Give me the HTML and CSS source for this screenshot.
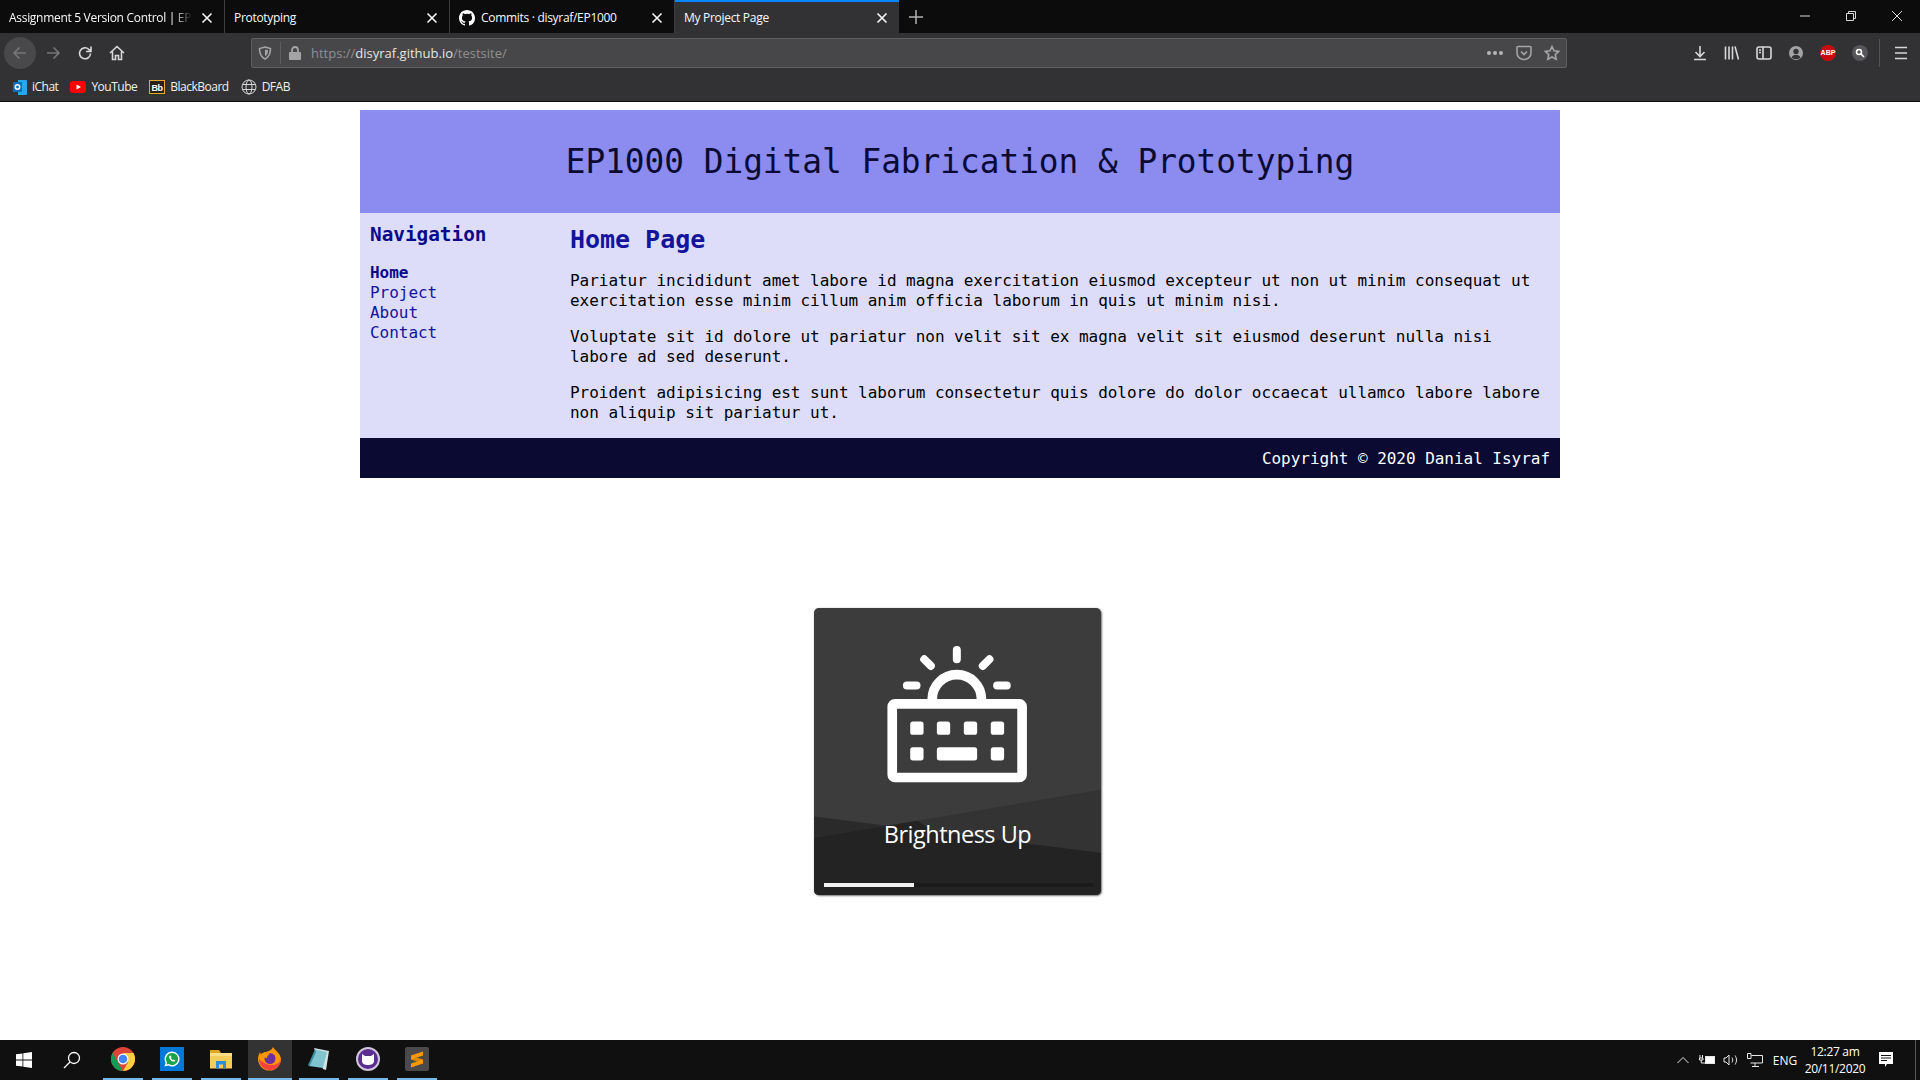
FILE: index.html
```html
<!DOCTYPE html>
<html>

<head>
    <meta charset="utf-8">
    <title>My Project Page</title>
    <link rel="stylesheet" href="styles.css">
</head>

<body>
    <!-- browser window -->
    <div class="tabbar">
        <div class="tab">
            <span class="tab-title fade">Assignment 5 Version Control | EP1000</span>
            <svg class="tab-close" width="12" height="12" viewBox="0 0 12 12"><path d="M1.5 1.5l9 9M10.5 1.5l-9 9" /></svg>
        </div>
        <div class="tab">
            <span class="tab-title">Prototyping</span>
            <svg class="tab-close" width="12" height="12" viewBox="0 0 12 12"><path d="M1.5 1.5l9 9M10.5 1.5l-9 9" /></svg>
        </div>
        <div class="tab">
            <svg class="tab-icon" width="16" height="16" viewBox="0 0 16 16"><path fill="#fff" d="M8 0C3.58 0 0 3.58 0 8c0 3.54 2.29 6.53 5.47 7.59.4.07.55-.17.55-.38v-1.34c-2.23.48-2.69-1.07-2.69-1.07-.36-.93-.89-1.17-.89-1.17-.73-.5.05-.49.05-.49.8.06 1.23.82 1.23.82.71 1.22 1.87.87 2.33.66.07-.52.28-.87.51-1.07-1.78-.2-3.64-.89-3.64-3.95 0-.87.31-1.59.82-2.15-.08-.2-.36-1.02.08-2.12 0 0 .67-.21 2.2.82A7.6 7.6 0 0 1 8 3.87c.68 0 1.36.09 2 .27 1.53-1.04 2.2-.82 2.2-.82.44 1.1.16 1.92.08 2.12.51.56.82 1.27.82 2.15 0 3.07-1.87 3.75-3.65 3.95.29.25.54.73.54 1.48v2.2c0 .21.15.46.55.38A8 8 0 0 0 16 8c0-4.42-3.58-8-8-8z" /></svg>
            <span class="tab-title">Commits · disyraf/EP1000</span>
            <svg class="tab-close" width="12" height="12" viewBox="0 0 12 12"><path d="M1.5 1.5l9 9M10.5 1.5l-9 9" /></svg>
        </div>
        <div class="tab tab-active">
            <span class="tab-title">My Project Page</span>
            <svg class="tab-close" width="12" height="12" viewBox="0 0 12 12"><path d="M1.5 1.5l9 9M10.5 1.5l-9 9" /></svg>
        </div>
        <svg class="new-tab" width="14" height="14" viewBox="0 0 14 14"><path d="M7 0v14M0 7h14" /></svg>
        <div class="window-buttons">
            <svg width="46" height="12" viewBox="0 0 46 12"><path d="M18 6h10" /></svg>
            <svg width="46" height="12" viewBox="0 0 46 12"><path d="M18.500 3.500h7v7h-7zM20.500 3.500v-2h7v7h-2" /></svg>
            <svg width="46" height="12" viewBox="0 0 46 12"><path d="M18 1l10 10M28 1l-10 10" /></svg>
        </div>
    </div>

    <div class="toolbar">
        <div class="nav-button nav-back">
            <svg width="16" height="16" viewBox="0 0 16 16"><path class="dim" d="M14 8H2M7.500 2.500L2 8l5.500 5.500" /></svg>
        </div>
        <div class="nav-button">
            <svg width="16" height="16" viewBox="0 0 16 16"><path class="dim" d="M2 8h12M8.500 2.500L14 8l-5.500 5.500" /></svg>
        </div>
        <div class="nav-button">
            <svg width="16" height="16" viewBox="0 0 16 16"><path d="M13.500 8.500a5.500 5.500 0 1 1-1.700-4.200L14 6.300M14 1.500v5h-5" /></svg>
        </div>
        <div class="nav-button">
            <svg width="16" height="16" viewBox="0 0 16 16"><path d="M1 8l7-6.500L15 8M3.500 6.500V14.500h3v-4h3v4h3V6.500" /></svg>
        </div>

        <div class="urlbar">
            <svg class="url-shield" width="14" height="14" viewBox="0 0 14 14"><path d="M7 1l5.500 1.500c0 5-1.500 8.500-5.500 10.500-4-2-5.500-5.500-5.500-10.500z" /><path class="fill-dim" d="M7 3.500l3 .8c0 2.700-.8 4.700-3 6z" /></svg>
            <span class="url-sep"></span>
            <svg class="url-lock" width="14" height="14" viewBox="0 0 14 14"><path fill="#a4a4a5" d="M2 6h10a1 1 0 0 1 1 1v6a1 1 0 0 1-1 1H2a1 1 0 0 1-1-1V7a1 1 0 0 1 1-1z" /><path class="lock-bow" d="M4 6.500V4a3 3 0 0 1 6 0v2.500" /></svg>
            <span class="url-text">https://<b>disyraf.github.io</b>/testsite/</span>
            <span class="url-dots"><i></i><i></i><i></i></span>
            <svg class="url-action" width="16" height="16" viewBox="0 0 16 16"><path d="M2 1.500h12a1 1 0 0 1 1 1V8a7 6.500 0 0 1-14 0V2.500a1 1 0 0 1 1-1zM5 6.500l3 3 3-3" /></svg>
            <svg class="url-action" width="16" height="16" viewBox="0 0 16 16"><path d="M8 1.500l2 4.300 4.700.6-3.400 3.200.9 4.700L8 12l-4.200 2.300.9-4.700L1.300 6.400 6 5.800z" /></svg>
        </div>

        <div class="toolbar-right">
            <svg width="16" height="16" viewBox="0 0 16 16"><path d="M8 1v10M3.500 7L8 11.500 12.500 7M2 14.500h12" /></svg>
            <svg width="16" height="16" viewBox="0 0 16 16"><path d="M1.500 1.500v13M5 1.500v13M8.500 1.500v13M11 1.500l3.500 13" /></svg>
            <svg width="16" height="16" viewBox="0 0 16 16"><rect x="1" y="2" width="14" height="12" rx="2" /><path d="M7 2v12M3 5h2M3 7.500h2" /></svg>
            <svg width="16" height="16" viewBox="0 0 16 16"><circle cx="8" cy="8" r="7" fill="#a4a4a5" stroke="none" /><circle class="fill-bar" cx="8" cy="6.500" r="2.700" stroke="none" /><path class="fill-bar" stroke="none" d="M3.500 12.500c1-2 2.500-2.500 4.500-2.500s3.500.5 4.500 2.500c-1.200 1-2.700 1.500-4.500 1.500s-3.300-.5-4.500-1.500z" /></svg>
            <span class="abp">ABP</span>
            <svg width="16" height="16" viewBox="0 0 16 16"><circle cx="8" cy="8" r="8" fill="#55555a" stroke="none" /><circle class="white-line" cx="7" cy="7" r="2.500" /><path class="white-line" d="M9 9l3 3" /></svg>
            <span class="toolbar-sep"></span>
            <svg width="16" height="16" viewBox="0 0 16 16"><path d="M2 2.500h12M2 8h12M2 13.500h12" /></svg>
        </div>
    </div>

    <div class="bookmarks">
        <span class="bookmark">
            <svg width="14" height="16" viewBox="0 0 14 16"><path fill="#28a8ea" d="M5 1h8a1 1 0 0 1 1 1v13a1 1 0 0 1-1 1H5z" /><rect y="3" width="9" height="10" rx="1" fill="#0f6cbd" /><circle cx="4.500" cy="8" r="2.200" fill="none" stroke="#fff" stroke-width="1.500" /></svg>
            iChat
        </span>
        <span class="bookmark">
            <svg width="16" height="12" viewBox="0 0 16 12"><rect width="16" height="12" rx="3" fill="#f00" /><path fill="#fff" d="M6.500 3.500v5L11 6z" /></svg>
            YouTube
        </span>
        <span class="bookmark">
            <svg width="16" height="14" viewBox="0 0 16 14"><rect x=".5" y=".5" width="15" height="13" fill="#26221a" stroke="#e5a935" /><text class="bb-mark" x="8" y="10.500" text-anchor="middle">Bb</text></svg>
            BlackBoard
        </span>
        <span class="bookmark">
            <svg class="globe" width="16" height="16" viewBox="0 0 16 16"><circle cx="8" cy="8" r="7" /><ellipse cx="8" cy="8" rx="3" ry="7" /><path d="M1.500 5.500h13M1.500 10.500h13" /></svg>
            DFAB
        </span>
    </div>

    <!-- the page itself -->
    <div class="viewport">
        <div class="container">
            <header class="site-header">
                <h1>EP1000 Digital Fabrication &amp; Prototyping</h1>
            </header>
            <div class="site-body">
                <nav class="sidebar">
                    <h2>Navigation</h2>
                    <ul>
                        <li><a class="current" href="#">Home</a></li>
                        <li><a href="#">Project</a></li>
                        <li><a href="#">About</a></li>
                        <li><a href="#">Contact</a></li>
                    </ul>
                </nav>
                <main class="content">
                    <h2>Home Page</h2>
                    <p>Pariatur incididunt amet labore id magna exercitation eiusmod excepteur ut non ut minim consequat ut exercitation esse minim cillum anim officia laborum in quis ut minim nisi.</p>
                    <p>Voluptate sit id dolore ut pariatur non velit sit ex magna velit sit eiusmod deserunt nulla nisi labore ad sed deserunt.</p>
                    <p>Proident adipisicing est sunt laborum consectetur quis dolore do dolor occaecat ullamco labore labore non aliquip sit pariatur ut.</p>
                </main>
            </div>
            <footer class="site-footer">Copyright © 2020 Danial Isyraf</footer>
        </div>

        <!-- on screen display -->
        <div class="osd">
            <svg class="osd-art" width="287" height="287" viewBox="42 24 860 862">
                <path fill="#333333" d="M42 715L902 570V886H42z" />
                <path fill="#2a2a2a" d="M42 650L902 760V886H42z" />
                <path fill="#232323" d="M42 715L42 886H902V760L400 696L352 663z" />
                <g fill="none" stroke="#fff" stroke-linecap="round">
                    <rect x="276" y="312" width="390" height="221" rx="8" stroke-width="29" />
                    <path stroke-width="29" stroke-linecap="butt" d="M396 298a74 74 0 0 1 148 0" />
                    <path stroke-width="24" d="M470 150v28M372 178l20 20M568 178l-20 20M320 257h29M591 257h29" />
                </g>
                <g fill="#fff">
                    <rect x="330" y="365" width="40" height="40" rx="8" />
                    <rect x="410" y="365" width="40" height="40" rx="8" />
                    <rect x="491" y="365" width="40" height="40" rx="8" />
                    <rect x="572" y="365" width="40" height="40" rx="8" />
                    <rect x="330" y="442" width="40" height="40" rx="8" />
                    <rect x="410" y="442" width="121" height="40" rx="8" />
                    <rect x="572" y="442" width="40" height="40" rx="8" />
                </g>
            </svg>
            <div class="osd-label">Brightness Up</div>
            <div class="osd-track"><div class="osd-fill"></div></div>
        </div>
    </div>

    <!-- windows taskbar -->
    <div class="taskbar">
        <div class="task-start">
            <svg width="16" height="16" viewBox="0 0 16 16"><path fill="#fff" d="M0 2.300l6.500-.9v6.200H0zM7.300 1.300L16 0v7.600H7.300zM0 8.400h6.500v6.200L0 13.700zM7.300 8.400H16V16l-8.700-1.300z" /></svg>
        </div>
        <div class="task-start">
            <svg class="search-icon" width="18" height="18" viewBox="0 0 18 18"><circle cx="11" cy="7" r="5.500" /><path d="M7 11l-6 6" /></svg>
        </div>
        <div class="task-apps">
            <div class="app">
                <div class="app-tile">
                    <svg width="24" height="24" viewBox="0 0 24 24"><circle cx="12" cy="12" r="12" fill="#db4437" /><path fill="#0f9d58" d="M12 24A12 12 0 0 1 1.600 6l5.200 9 4.900 9z" /><path fill="#ffcd40" d="M12 24a12 12 0 0 0 10.400-18H12l5.200 9z" /><circle cx="12" cy="12" r="5.500" fill="#fff" /><circle cx="12" cy="12" r="4.300" fill="#4285f4" /></svg>
                </div>
            </div>
            <div class="app">
                <div class="app-tile">
                    <svg width="24" height="24" viewBox="0 0 24 24"><rect width="24" height="24" fill="#0078d7" /><path fill="#fff" d="M12 4.500a7.500 7.500 0 0 0-6.400 11.300L4.500 19.500l3.800-1A7.500 7.500 0 1 0 12 4.500z" /><path fill="#1aa34a" d="M12 6a6 6 0 0 0-5 9.300l-.6 2.200 2.300-.6A6 6 0 1 0 12 6z" /><path fill="#fff" d="M9.700 8.700c-.6.500-.9 1.500-.2 2.800.8 1.500 2.100 2.700 3.500 3.100 1 .3 2-.2 2.300-1.200l-1.700-1-.8.700c-.8-.4-1.500-1.100-1.900-2l.7-.8-.9-1.700z" /></svg>
                </div>
            </div>
            <div class="app">
                <div class="app-tile">
                    <svg width="24" height="24" viewBox="0 0 24 24"><path fill="#e0a526" d="M1 3h9l2 3h-11z" /><path fill="#f5cc5b" d="M1 6h22v15.500H1z" /><path fill="#f9de88" d="M1 6h22v3H1z" /><path fill="#2c8fd8" d="M7 14h10v7.500h-3v-4h-4v4H7z" /></svg>
                </div>
            </div>
            <div class="app app-active">
                <div class="app-tile">
                    <svg width="24" height="24" viewBox="0 0 24 24"><path fill="#ff9500" d="M15 0c1 3 7 5 8 12a11.500 11.500 0 1 1-23 0c0-3 1-5 2-7l1 3c1-2 3-3 5-3 3-1 6-2 7-5z" /><path fill="#f5413c" d="M1 12a11 11 0 0 0 22 0c-1 4-5 6-9 6-5 0-9-2-13-6z" /><circle cx="12" cy="11.500" r="5.500" fill="#6b2ea0" /><path fill="#ff9500" d="M3 7c3-2 7-2 9 0-2 1-3 2-3 4-3 0-5-2-6-4z" /></svg>
                </div>
            </div>
            <div class="app">
                <div class="app-tile">
                    <svg width="24" height="24" viewBox="0 0 24 24"><path fill="#d7e4e6" d="M7 1l15 3-3 19-3-1z" /><path fill="#7fc4cf" d="M8 2.500l12 2.500-4 16-14-2z" /><path fill="#3a8b9e" d="M8 2.500L1 18l1.500 1.500L9 5z" /></svg>
                </div>
            </div>
            <div class="app">
                <div class="app-tile">
                    <svg width="24" height="24" viewBox="0 0 24 24"><circle cx="12" cy="12" r="11" fill="#5c2d91" stroke="#cfc6da" stroke-width="2" /><path fill="#fff" d="M6 7l3 2h6l3-2v7c0 3-3 4-6 4s-6-1-6-4z" /></svg>
                </div>
            </div>
            <div class="app">
                <div class="app-tile">
                    <svg width="24" height="24" viewBox="0 0 24 24"><rect width="24" height="24" rx="2" fill="#4a4a4a" /><path fill="#e08600" d="M6 8.500l12 4v4l-12-4z" /><path fill="#ff9800" d="M18 4.500L6 8.500v4l12-4zM18 12.500L6 16.500v4l12-4z" /></svg>
                </div>
            </div>
        </div>
        <div class="tray">
            <span class="tray-item"><svg width="12" height="8" viewBox="0 0 12 8"><path d="M.5 7L6 1.500 11.500 7" /></svg></span>
            <span class="tray-item"><svg width="17" height="10" viewBox="0 0 17 10"><path d="M1 0v3M3.500 0v3M.5 3h3.500v2h-3.500zM2.250 5v3H6" /><rect x="6.500" y="1.500" width="9" height="7" fill="#fff" stroke="#e8e8e8" /></svg></span>
            <span class="tray-item"><svg width="16" height="12" viewBox="0 0 16 12"><path d="M1 4h2l3-3v10L3 8H1zM9 3.500c1 1.500 1 3.500 0 5M12 1.500c2 3 2 6 0 9" /></svg></span>
            <span class="tray-item"><svg width="16" height="14" viewBox="0 0 16 14"><path d="M4.500 2.500H15.500V10H3.500M8 10v3M5 13.500h7M.5.500h3.500v5H.5z" /></svg></span>
            <span class="tray-lang">ENG</span>
            <span class="tray-clock">12:27 am<br>20/11/2020</span>
            <span class="tray-note"><svg width="16" height="16" viewBox="0 0 16 16"><path fill="#fff" stroke="none" d="M0 0h14v12H8l-2 3v-3H0z" /><path stroke="#111" d="M2 3.500h10M2 6h10M2 8.500h6" /></svg></span>
            <span class="show-desktop"></span>
        </div>
    </div>
</body>

</html>
```

FILE: styles.css
```css
* {
    margin: 0;
    padding: 0;
    box-sizing: border-box;
}

html,
body {
    height: 100%;
    overflow: hidden;
}

body {
    display: flex;
    flex-direction: column;
    font-family: "Open Sans", "Noto Sans", sans-serif;
    background: #fff;
}

svg {
    display: block;
    flex: none;
    fill: none;
}

/* tab strip */
.tabbar {
    display: flex;
    height: 33px;
    background: #0c0c0d;
    color: #f9f9fa;
    font-size: 12px;
}

.tab {
    display: flex;
    align-items: center;
    width: 225px;
    height: 33px;
    padding: 2px 11px 0 9px;
    border-right: 1px solid #3d3d3f;
}

.tab-active {
    width: 224px;
    background: #323234;
    border-right: 0;
    border-top: 2px solid #0a84ff;
    padding-top: 0;
}

.tab-title {
    flex: 1;
    white-space: nowrap;
    overflow: hidden;
    letter-spacing: -0.3px;
}

.fade {
    -webkit-mask-image: linear-gradient(to right, #000 90%, transparent);
    mask-image: linear-gradient(to right, #000 90%, transparent);
}

.tab-icon {
    margin-right: 6px;
}

.tab-close {
    stroke: #f9f9fa;
    stroke-width: 1.6;
    margin-left: 9px;
}

.new-tab {
    align-self: center;
    margin-left: 10px;
    stroke: #b1b1b3;
    stroke-width: 1.5;
}

.window-buttons {
    display: flex;
    align-items: center;
    margin-left: auto;
    height: 33px;
    padding-bottom: 1px;
}

.window-buttons svg {
    stroke: #d8d8d8;
}

/* navigation toolbar */
.toolbar {
    display: flex;
    align-items: center;
    height: 37px;
    padding: 3px 0 0 4px;
    background: #323234;
}

.toolbar svg {
    stroke: #d7d7d8;
    stroke-width: 1.600;
}

.nav-button {
    display: flex;
    align-items: center;
    justify-content: center;
    width: 32px;
    height: 32px;
}

.nav-back {
    border-radius: 50%;
    background: #49494b;
    margin-right: 1px;
}

.toolbar .dim {
    stroke: #77777a;
}

.urlbar {
    display: flex;
    align-items: center;
    width: 1316px;
    height: 30px;
    margin-left: 118px;
    padding: 0 6px 0 6px;
    background: #474749;
    border: 1px solid #5e5e60;
    border-radius: 2px;
    color: #8f8f91;
    font-size: 13px;
}

.toolbar .urlbar svg {
    stroke: #a4a4a5;
}

.url-shield {
    margin-right: 8px;
}

.url-sep {
    width: 1px;
    height: 22px;
    background: #5e5e60;
}

.toolbar .fill-dim {
    fill: #a4a4a5;
    stroke: none;
}

.url-lock {
    margin-left: 7px;
}

.toolbar .urlbar .url-lock {
    stroke: none;
}

.toolbar .urlbar .lock-bow {
    stroke: #a4a4a5;
    stroke-width: 1.800;
}

.url-text {
    flex: 1;
    margin-left: 9px;
}

.url-text b {
    font-weight: 400;
    color: #e4e4e4;
}

.url-dots {
    display: flex;
    gap: 2px;
    margin-right: 1px;
}

.url-dots i {
    width: 4px;
    height: 4px;
    border-radius: 50%;
    background: #b4b4b5;
}

.url-action {
    margin-left: 12px;
}

.toolbar-right {
    display: flex;
    align-items: center;
    gap: 16px;
    margin-left: 125px;
}

.toolbar .white-line {
    stroke: #fff;
    stroke-width: 1.600;
}

.toolbar .fill-bar {
    fill: #323234;
}

.abp {
    width: 16px;
    height: 16px;
    border-radius: 50%;
    background: #c70d0d;
    color: #fff;
    font: 700 7px/16px "Liberation Sans", sans-serif;
    text-align: center;
}

.toolbar-sep {
    width: 1px;
    height: 28px;
    margin-left: -5px;
    margin-right: -3px;
    background: #535355;
}

/* bookmarks */
.bookmarks {
    display: flex;
    align-items: center;
    gap: 12px;
    height: 32px;
    padding: 2px 0 0 13px;
    background: #323234;
    border-bottom: 1px solid #0c0c0d;
    color: #f0f0f0;
    font-size: 12px;
    letter-spacing: -0.5px;
}

.bookmark {
    display: flex;
    align-items: center;
    gap: 5px;
}

.bb-mark {
    fill: #fff;
    font: 700 9px "Liberation Sans", sans-serif;
}

.globe {
    stroke: #d7d7d8;
    stroke-width: 1;
}

/* page in the browser */
.viewport {
    flex: 1;
    position: relative;
    padding: 8px;
    font-family: "DejaVu Sans Mono", "Liberation Mono", monospace;
    font-size: 16px;
    letter-spacing: -0.03px;
    line-height: 20px;
    color: #000;
}

.container {
    width: 1200px;
    margin: 0 auto;
}

.site-header {
    display: flex;
    align-items: center;
    justify-content: center;
    height: 103px;
    background: #8b8bf0;
    color: #0a0a33;
}

.site-header h1 {
    font-size: 32.800px;
    font-weight: 400;
    line-height: 40px;
}

.site-body {
    display: flex;
    height: 225px;
    background: #ddddfa;
}

.sidebar {
    width: 200px;
    padding: 12px 10px;
    color: #14149b;
}

.sidebar h2 {
    font-size: 19.400px;
    line-height: 20px;
    color: #0a0a8a;
    margin-bottom: 18px;
}

.sidebar ul {
    list-style: none;
}

.sidebar a {
    color: #14149b;
    text-decoration: none;
}

.sidebar a.current {
    color: #0a0a8a;
    font-weight: 700;
}

.content {
    flex: 1;
    padding: 12px 10px 0 10px;
}

.content h2 {
    font-size: 25px;
    line-height: 20px;
    margin: 5px 0 21px;
    color: #14149b;
}

.content p {
    margin-bottom: 16px;
}

.site-footer {
    height: 40px;
    padding: 11px 10px 0;
    background: #0a0a33;
    color: #fff;
    text-align: right;
}

/* volume style overlay */
.osd {
    position: absolute;
    left: 814px;
    top: 506px;
    width: 287px;
    height: 287px;
    display: flex;
    flex-direction: column;
    align-items: center;
    background: #3c3c3c;
    border-radius: 5px;
    overflow: hidden;
    box-shadow: 0 0 1px 0 #999, 1px 1px 2px 0 #777;
    font-family: "Open Sans", "Noto Sans", sans-serif;
    color: #fff;
}

.osd-art {
    position: absolute;
    left: 0;
    top: 0;
}

.osd-label {
    position: relative;
    margin-top: 210px;
    font-size: 23.500px;
    line-height: 32px;
    letter-spacing: -0.5px;
}

.osd-track {
    position: relative;
    width: 269px;
    height: 4px;
    margin: 33px 0 0 2px;
    background: #1b1b1b;
}

.osd-fill {
    width: 33.500%;
    height: 100%;
    background: #f2f2f2;
}

/* taskbar */
.taskbar {
    display: flex;
    align-items: center;
    height: 40px;
    background: #101010;
    color: #fff;
}

.task-start {
    display: flex;
    align-items: center;
    justify-content: center;
    width: 48px;
    height: 40px;
}

.search-icon {
    stroke: #fff;
    stroke-width: 1.300;
}

.task-apps {
    display: flex;
    margin-left: 2px;
}

.app {
    display: flex;
    justify-content: center;
    width: 49px;
    height: 40px;
}

.app-tile {
    display: flex;
    align-items: center;
    justify-content: center;
    width: 40px;
    height: 40px;
    border-bottom: 2px solid #76b9ed;
}

.app-active .app-tile {
    width: 44px;
    background: #333;
}

.tray {
    display: flex;
    align-items: center;
    margin-left: auto;
    height: 40px;
    font-size: 12px;
}

.tray svg {
    stroke: #e8e8e8;
    stroke-width: 1;
}

.tray-item {
    display: flex;
    justify-content: center;
    width: 24px;
}

.tray-lang {
    width: 36px;
    text-align: center;
}

.tray-clock {
    width: 64px;
    text-align: center;
    line-height: 17px;
    letter-spacing: -0.3px;
}

.tray-note {
    display: flex;
    justify-content: center;
    width: 40px;
}

.show-desktop {
    width: 1px;
    height: 40px;
    margin-left: 8px;
    margin-right: 4px;
    background: #555;
}
```
